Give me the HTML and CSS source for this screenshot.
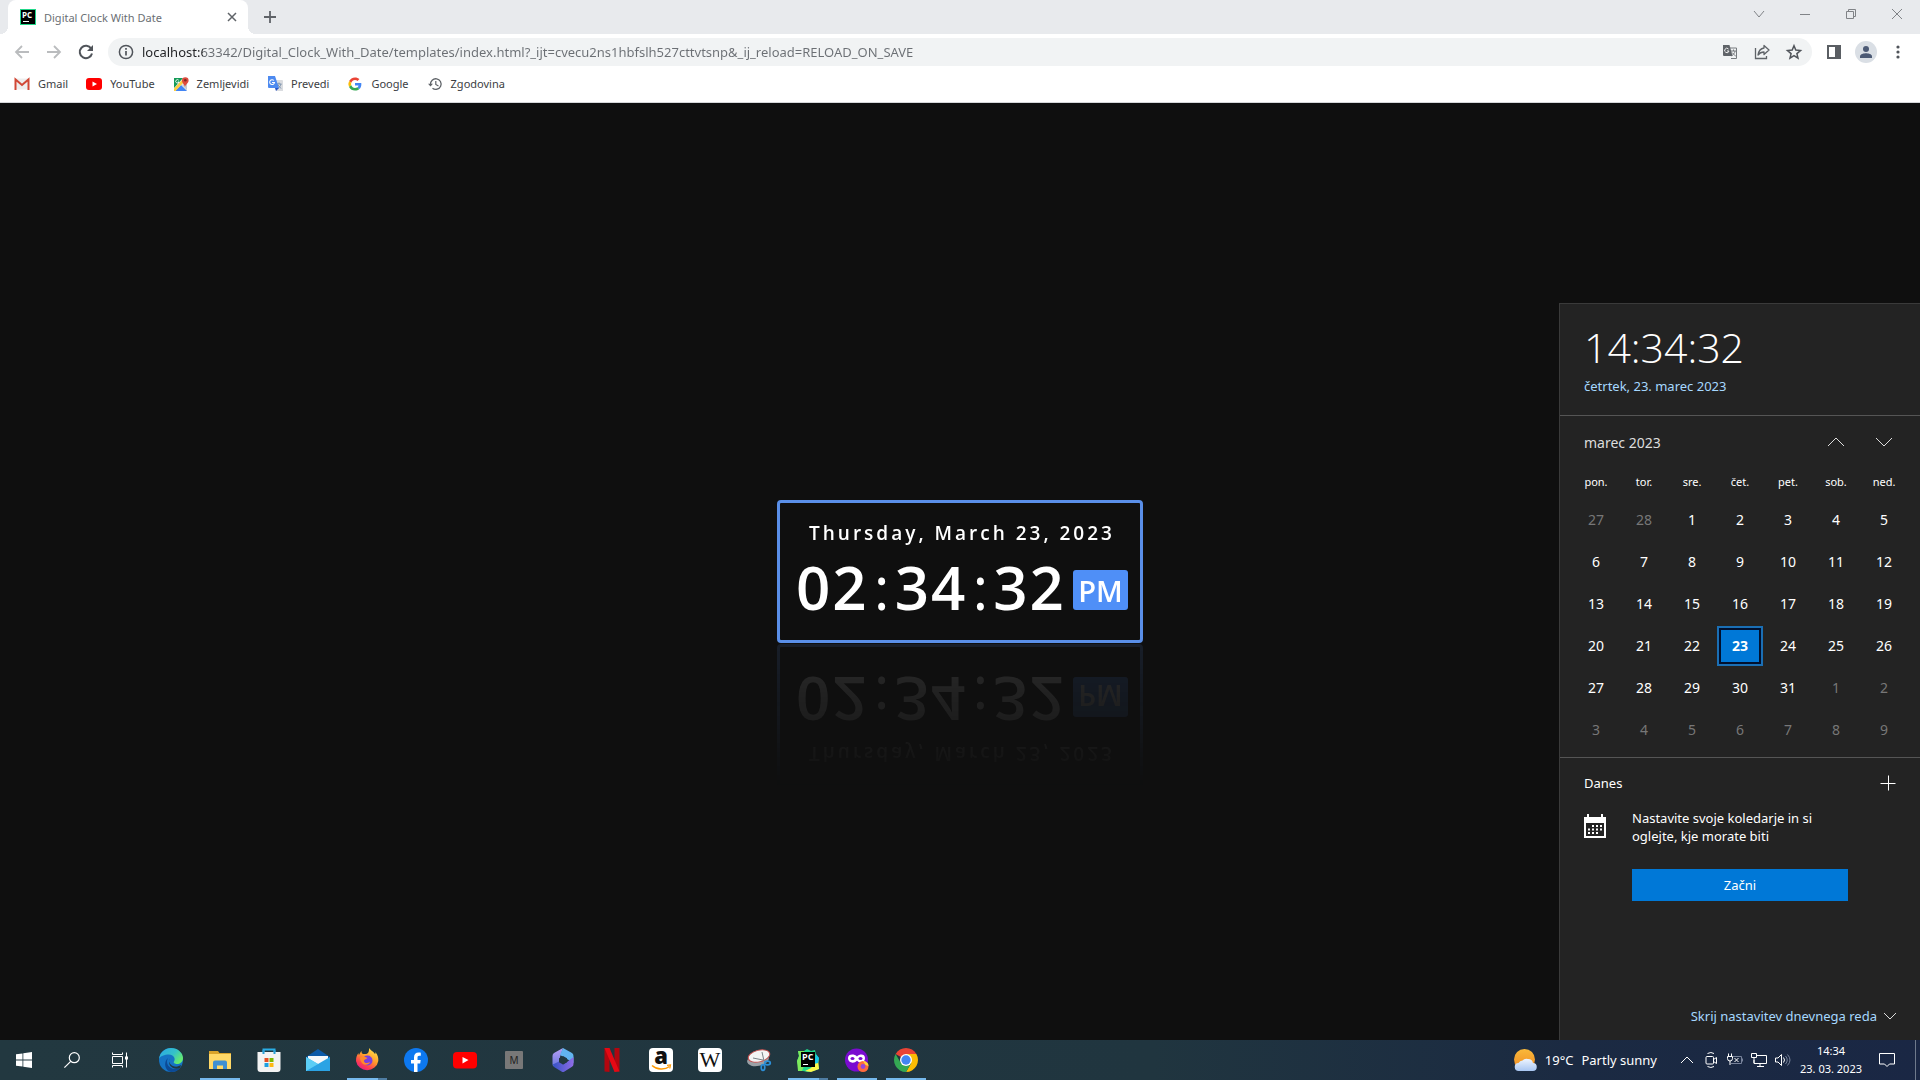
FILE: index.html
```html
<!DOCTYPE html>
<html lang="sl">
<head>
<meta charset="utf-8">
<title>Digital Clock With Date</title>
<link rel="stylesheet" href="styles.css">
</head>
<body>
<header class="browser">
  <div class="tabstrip">
    <div class="tab">
      <svg class="i16" viewBox="0 0 16 16"><rect width="16" height="16" fill="#21d789"/><rect x="1" y="1" width="14" height="14" fill="#000"/><text x="2" y="9" class="pc-text">PC</text><rect x="3" y="12" width="6" height="1" fill="#fff"/></svg>
      <span class="tab-title">Digital Clock With Date</span>
      <button class="icon-btn tab-close" aria-label="Close tab"><svg class="i16" viewBox="0 0 16 16"><path d="M4 4l8 8M12 4l-8 8" stroke="#5f6368" stroke-width="1.500"/></svg></button>
    </div>
    <button class="icon-btn new-tab" aria-label="New tab"><svg class="i16" viewBox="0 0 16 16"><path d="M8 2v12M2 8h12" stroke="#5f6368" stroke-width="1.800"/></svg></button>
    <div class="window-controls">
      <button class="win-btn" aria-label="Search tabs"><svg class="i12" viewBox="0 0 12 12"><path d="M1 3l5 6 5-6"/></svg></button>
      <button class="win-btn" aria-label="Minimize"><svg class="i12" viewBox="0 0 12 12"><path d="M1 6.500h10"/></svg></button>
      <button class="win-btn" aria-label="Restore"><svg class="i12" viewBox="0 0 12 12"><path d="M1.500 3.500h7v7h-7zM3.500 3.500v-2h7v7h-2"/></svg></button>
      <button class="win-btn" aria-label="Close"><svg class="i12" viewBox="0 0 12 12"><path d="M1 1l10 10M11 1L1 11"/></svg></button>
    </div>
  </div>
  <div class="toolbar">
    <div class="nav-buttons">
      <button class="icon-btn" aria-label="Back"><svg class="i16" viewBox="0 0 16 16"><path d="M15 8H2M8 2L2 8l6 6" fill="none" stroke="#babcbe" stroke-width="1.800"/></svg></button>
      <button class="icon-btn" aria-label="Forward"><svg class="i16" viewBox="0 0 16 16"><path d="M1 8h13M8 2l6 6-6 6" fill="none" stroke="#babcbe" stroke-width="1.800"/></svg></button>
      <button class="icon-btn" aria-label="Reload"><svg class="i16" viewBox="0 0 16 16"><path d="M13.200 4.600A6.200 6.200 0 1 0 14 9.500" fill="none" stroke="#50545a" stroke-width="2"/><path d="M15 1v6H9z" fill="#50545a"/></svg></button>
    </div>
    <div class="omnibox">
      <svg class="i16" viewBox="0 0 16 16"><circle cx="8" cy="8" r="6.600" fill="none" stroke="#50545a" stroke-width="1.500"/><path d="M8 7v4.600M8 4v1.700" stroke="#50545a" stroke-width="1.700"/></svg>
      <input class="url" type="text" aria-label="Address" value="localhost:63342/Digital_Clock_With_Date/templates/index.html?_ijt=cvecu2ns1hbfslh527cttvtsnp&amp;_ij_reload=RELOAD_ON_SAVE">
      <button class="icon-btn" aria-label="Translate page"><svg class="i16" viewBox="0 0 16 16"><path d="M8 4h6.500v10.500H9" fill="none" stroke="#777b7f"/><path d="M9 7h5M11.500 5.500V7M13 7c0 2-2 4-4 5M10 8.500l4 4" fill="none" stroke="#777b7f"/><path d="M1 1h6.500l3 11H2a1 1 0 0 1-1-1z" fill="#5f6368"/><path d="M6.500 5A2.200 2.200 0 1 0 7 7H5" fill="none" stroke="#eee" stroke-width="1"/></svg></button>
      <button class="icon-btn" aria-label="Share"><svg class="i16" viewBox="0 0 16 16"><path d="M1.500 4v10.500h11V12" fill="none" stroke="#5f6368" stroke-width="1.300"/><path d="M10 1.500L15 6l-5 4.500V8C7 8 5.500 9 4 11c.5-3.500 2.500-6.500 6-7z" fill="none" stroke="#5f6368" stroke-width="1.300" stroke-linejoin="round"/></svg></button>
      <button class="icon-btn" aria-label="Bookmark"><svg class="i16" viewBox="0 0 16 16"><path d="M8 1.800l1.800 4.300 4.700.4-3.600 3.100 1.100 4.600L8 11.700l-4 2.500 1.100-4.600-3.600-3.100 4.700-.4z" fill="none" stroke="#50545a" stroke-width="1.500"/></svg></button>
    </div>
    <div class="toolbar-end">
      <button class="icon-btn" aria-label="Side panel"><svg class="i16" viewBox="0 0 16 16"><path d="M1 1h14v14H1z M3 3v10h6V3z" fill="#5a5e63" fill-rule="evenodd"/></svg></button>
      <button class="icon-btn" aria-label="Profile"><svg class="i22" viewBox="0 0 22 22"><circle cx="11" cy="11" r="11" fill="#dadfe5"/><circle cx="11" cy="8" r="3" fill="#4c5a75"/><path d="M5 17v-1.500C5 13 9 12.300 11 12.300s6 .7 6 3.200V17z" fill="#4c5a75"/></svg></button>
      <button class="icon-btn" aria-label="Menu"><svg class="i16" viewBox="0 0 16 16"><g fill="#50545a"><circle cx="8" cy="3" r="1.600"/><circle cx="8" cy="8" r="1.600"/><circle cx="8" cy="13" r="1.600"/></g></svg></button>
    </div>
  </div>
  <nav class="bookmarks">
    <a href="#"><svg class="i16" viewBox="0 0 16 16"><path d="M2 2.500h12v11H2z" fill="#eee"/><path d="M1.500 14V3.500L8 9l6.500-5.500V14" fill="none" stroke="#d14836" stroke-width="2"/></svg>Gmail</a>
    <a href="#"><svg class="i16" viewBox="0 0 16 16"><rect y="2" width="16" height="12" rx="3" fill="#f00"/><path d="M6.500 5.500v5L11 8z" fill="#fff"/></svg>YouTube</a>
    <a href="#"><svg class="i16" viewBox="0 0 16 16"><rect x="1" y="2" width="13" height="13" rx="1" fill="#e8eaed"/><path d="M1 2h9L1 12z" fill="#169b58"/><path d="M2 15l6-6 6 6z" fill="#4285f4"/><path d="M1 12.500L10 3l2 2-9.500 10H1z" fill="#ffcf3f"/><path d="M9 9l5-2v7z" fill="#c7cbd0"/><path d="M12 11c-.5-3-3-3.500-3-6.500a3.300 3.300 0 0 1 6.600 0c0 3-3 3.500-3.600 6.500z" fill="#dd4b3e"/><circle cx="12.300" cy="4.300" r="1.300" fill="#812a22"/><path d="M5.700 4.200A1.700 1.700 0 1 0 6 6H4.700" fill="none" stroke="#fff" stroke-width=".9"/></svg>Zemljevidi</a>
    <a href="#"><svg class="i16" viewBox="0 0 16 16"><path d="M6 4h9a1 1 0 0 1 1 1v10H9z" fill="#dadce0"/><path d="M9.500 8h5M12 6.500V8M14 8c-.5 2.500-2 3.500-3.500 4.500M11 9l3 3.500" fill="none" stroke="#7c93ad"/><path d="M9 15l3-3H8z" fill="#2a56c6"/><path d="M1 0h7l4 12H2a1 1 0 0 1-1-1z" fill="#4d8af0"/><path d="M6.900 4.500A2.400 2.400 0 1 0 7.500 6.500H5" fill="none" stroke="#fff" stroke-width="1.100"/></svg>Prevedi</a>
    <a href="#"><svg class="i16" viewBox="-5 -5 58 58"><path fill="#ea4335" d="M24 9.500c3.500 0 6.700 1.200 9.200 3.600l6.900-6.900C35.900 2.400 30.500 0 24 0 14.600 0 6.500 5.400 2.600 13.200l8 6.200C12.400 13.700 17.700 9.500 24 9.500z"/><path fill="#4285f4" d="M47 24.600c0-1.600-.2-3.100-.4-4.600H24v9h12.900c-.6 3-2.200 5.500-4.700 7.200l7.700 6C44.400 38 47 31.800 47 24.600z"/><path fill="#fbbc05" d="M10.500 28.600a14.500 14.500 0 0 1 0-9.200l-8-6.200a24 24 0 0 0 0 21.600z"/><path fill="#34a853" d="M24 48c6.500 0 11.900-2.100 15.900-5.800l-7.700-6c-2.200 1.400-4.900 2.300-8.200 2.300-6.300 0-11.600-4.200-13.500-9.900l-8 6.200C6.500 42.600 14.600 48 24 48z"/></svg>Google</a>
    <a href="#"><svg class="i16" viewBox="0 0 16 16"><path d="M3.500 8.500A5.300 5.300 0 1 1 5.500 12.200" fill="none" stroke="#5f6368" stroke-width="1.300"/><path d="M1 7.800h5L3.500 10.500z" fill="#5f6368"/><path d="M8.800 5V8.500l2.700 1.600" fill="none" stroke="#5f6368" stroke-width="1.200"/></svg>Zgodovina</a>
  </nav>
</header>

<main class="page">
  <section class="clock">
    <div class="clock-date">Thursday, March 23, 2023</div>
    <div class="clock-row">
      <div class="clock-time"><span>02</span><span class="colon">:</span><span>34</span><span class="colon">:</span><span>32</span></div>
      <span class="meridiem">PM</span>
    </div>
  </section>

  <aside class="flyout">
    <div class="fly-top">
      <div class="fly-time">14:34:32</div>
      <a class="fly-date" href="#">četrtek, 23. marec 2023</a>
    </div>
    <div class="fly-cal">
      <div class="month-row">
        <button class="month">marec 2023</button>
        <button class="arrow" aria-label="Previous month"><svg class="i18" viewBox="0 0 18 18"><path d="M1 13l8-8 8 8"/></svg></button>
        <button class="arrow" aria-label="Next month"><svg class="i18" viewBox="0 0 18 18"><path d="M1 5l8 8 8-8"/></svg></button>
      </div>
      <table class="days">
        <thead><tr><th>pon.</th><th>tor.</th><th>sre.</th><th>čet.</th><th>pet.</th><th>sob.</th><th>ned.</th></tr></thead>
        <tbody>
          <tr><td class="out">27</td><td class="out">28</td><td>1</td><td>2</td><td>3</td><td>4</td><td>5</td></tr>
          <tr><td>6</td><td>7</td><td>8</td><td>9</td><td>10</td><td>11</td><td>12</td></tr>
          <tr><td>13</td><td>14</td><td>15</td><td>16</td><td>17</td><td>18</td><td>19</td></tr>
          <tr><td>20</td><td>21</td><td>22</td><td><span class="today">23</span></td><td>24</td><td>25</td><td>26</td></tr>
          <tr><td>27</td><td>28</td><td>29</td><td>30</td><td>31</td><td class="out">1</td><td class="out">2</td></tr>
          <tr><td class="out">3</td><td class="out">4</td><td class="out">5</td><td class="out">6</td><td class="out">7</td><td class="out">8</td><td class="out">9</td></tr>
        </tbody>
      </table>
    </div>
    <div class="fly-agenda">
      <div class="agenda-head">
        <span>Danes</span>
        <button class="icon-btn" aria-label="Add event"><svg class="i16" viewBox="0 0 16 16"><path d="M.5 8.500h15M8.500 .5v15" stroke="#fff"/></svg></button>
      </div>
      <div class="agenda-body">
        <svg class="cal-icon" viewBox="0 0 22 24"><path d="M0 3h22v21H0zM2 9v13h18V9z" fill="#fff" fill-rule="evenodd"/><path d="M3 0h2v4H3zM17 0h2v4h-2z" fill="#fff"/><path d="M8 11h2v2H8zM12 11h2v2h-2zM16 11h2v2h-2zM4 14.500h2v2H4zM8 14.500h2v2H8zM12 14.500h2v2h-2zM16 14.500h2v2h-2zM4 18h2v2H4zM8 18h2v2H8zM12 18h2v2h-2z" fill="#fff"/></svg>
        <div class="agenda-text">
          <p>Nastavite svoje koledarje in si<br>oglejte, kje morate biti</p>
          <button class="start">Začni</button>
        </div>
      </div>
      <a class="hide-link" href="#">Skrij nastavitev dnevnega reda <svg class="i12" viewBox="0 0 12 12"><path d="M0 3l6 6 6-6"/></svg></a>
    </div>
  </aside>
</main>

<footer class="taskbar">
  <div class="system">
    <button class="sys-btn" aria-label="Start"><svg class="i16" viewBox="0 0 16 16"><path d="M0 2.300L6.500 1.400v6.200H0zM7.300 1.300L16 0v7.600H7.300zM0 8.400h6.500v6.200L0 13.700zM7.300 8.400H16V16l-8.700-1.300z" fill="#fff"/></svg></button>
    <button class="sys-btn" aria-label="Search"><svg class="i16" viewBox="0 0 16 16"><circle cx="10.300" cy="5.700" r="5" fill="none" stroke="#fff" stroke-width="1.200"/><path d="M6.700 9.300L.4 15.600" stroke="#fff" stroke-width="1.200"/></svg></button>
    <button class="sys-btn" aria-label="Task view"><svg class="i16" viewBox="0 0 16 16"><g fill="none" stroke="#fff"><path d="M.5 4.500h10v7H.5zM.5 .5v2h10V.5M.5 15.500v-2h10v2M14.500 .5v15"/></g><path d="M13 4.500h3v3h-3z" fill="#fff"/></svg></button>
  </div>
  <div class="apps">
    <button class="app" aria-label="Edge"><svg class="i24" viewBox="0 0 24 24"><defs><linearGradient id="e1" x1="0" x2="1" y1="0" y2=".6"><stop stop-color="#2aa7e8"/><stop offset=".6" stop-color="#35c1c8"/><stop offset="1" stop-color="#66eb6e"/></linearGradient></defs><circle cx="12" cy="12" r="12" fill="#1573c4"/><path d="M0 11C1 4 6 0 12 0c7 0 12 5 12 10 0 4-3 6-6 6-2 0-4-1-3-2.500 2-3-.5-7-5-7S1 8 0 11z" fill="url(#e1)"/><path d="M9 10c-3 5 1 11 7 11 2 0 4-.6 5.500-1.500A12 12 0 0 1 12 24C6 23 4 14 9 10z" fill="#0c4a96"/><path d="M10.500 10.500c-1.500 3 .5 7 5 8 2.500.5 5-.5 6.500-1.500 0 1-.5 2-1.200 3C15 22.500 8 18 10.500 10.500z" fill="#223840"/></svg></button>
    <button class="app active" aria-label="File Explorer"><svg class="i24" viewBox="0 0 24 24"><path d="M1 3h9l1.500 2H23v4H1z" fill="#d9a32a"/><path d="M1 6h22v15H1z" fill="#ffd867"/><path d="M5 21v-6.500a2 2 0 0 1 2-2h10a2 2 0 0 1 2 2V21h-4v-3.500H9V21z" fill="#3f8fd2"/></svg></button>
    <button class="app" aria-label="Microsoft Store"><svg class="i24" viewBox="0 0 24 24"><path d="M6.500 6V1.500h11V6" fill="none" stroke="#2aaee6" stroke-width="2"/><path d="M.5 4h23v17a3 3 0 0 1-3 3h-17a3 3 0 0 1-3-3z" fill="#f3f3f3"/><path d="M6.500 2v4M17.500 2v4" stroke="#2a9fd6" stroke-width="2"/><path d="M7.500 10h4v4h-4z" fill="#e64f22"/><path d="M12.500 10h4v4h-4z" fill="#7eb900"/><path d="M7.500 15h4v4h-4z" fill="#1e9fe0"/><path d="M12.500 15h4v4h-4z" fill="#fdb813"/></svg></button>
    <button class="app" aria-label="Mail"><svg class="i24" viewBox="0 0 24 24"><path d="M0 9l12-8 12 8v4H0z" fill="#0c5aa8"/><path d="M2 8h20v8H2z" fill="#f5f8fb"/><path d="M0 9l24 14H0z" fill="#42b9ee"/><path d="M24 9L0 23h24z" fill="#2ba3e4"/><path d="M0 9l12 7L0 23z" fill="#5bcdf5"/></svg></button>
    <button class="app active multi" aria-label="Firefox"><svg class="i24" viewBox="0 0 24 24"><defs><linearGradient id="f1" x1=".8" x2=".2" y1="0" y2="1"><stop stop-color="#ffe44b"/><stop offset=".45" stop-color="#ff9a2b"/><stop offset=".75" stop-color="#ff3f4f"/><stop offset="1" stop-color="#e3148e"/></linearGradient></defs><path d="M14 0c1 2 4 3 6 6 .6-.2.500-1 .3-2C23 7 23.500 10 23.300 13A11.300 11 0 0 1 1 13c0-4 1-6 2.500-8 0 1 0 1.500.5 2C5 5 5.500 4 6.500 3c0 1.500.3 2.500 1.500 3 3 0 4 0 5-1 .8-1 1.200-3 1-5z" fill="url(#f1)"/><circle cx="12.500" cy="12.500" r="5" fill="#7a3ee0"/><path d="M5 10c2-2 5-1 7.500 0-1 1.500-3 1-3.500 2.500C8.500 15 12 16 15 14c-1 4-9 4.500-10-4z" fill="#ff8a2a"/></svg></button>
    <button class="app" aria-label="Facebook"><svg class="i24" viewBox="0 0 24 24"><circle cx="12" cy="12" r="12" fill="#0d78f0"/><path d="M10 24v-8.500H7V12h3V9.400C10 6.300 11.800 4.600 14.600 4.600c1.200 0 2.200.2 2.200.2v3h-1.500c-1.500 0-1.800.9-1.800 1.900V12h3.200l-.5 3.500h-2.700V24z" fill="#fff"/></svg></button>
    <button class="app" aria-label="YouTube"><svg class="i24" viewBox="0 0 24 24"><rect y="4" width="24" height="16.500" rx="4" fill="#f00"/><path d="M9.500 9v6.500L15.500 12z" fill="#fff"/></svg></button>
    <button class="app" aria-label="M"><span class="m-icon">M</span></button>
    <button class="app" aria-label="Microsoft 365"><svg class="i24" viewBox="0 0 24 24"><defs><linearGradient id="m1" x1="0" x2="0" y1="0" y2="1"><stop stop-color="#b9a0f5"/><stop offset="1" stop-color="#6a78e0"/></linearGradient><linearGradient id="m2" x1="0" x2="1"><stop stop-color="#3552c4"/><stop offset="1" stop-color="#8f6ce6"/></linearGradient></defs><path d="M12 0L3 5Q1.500 6 1.500 8v8q0 2 1.500 2.500L9 15V9z" fill="url(#m1)"/><path d="M12 0l9 5q1.500 1 1.500 3v7l-6.500-4-7-4z" fill="#62b4f0"/><path d="M1.800 16.500L9 13l3 3.500 4-2.500 6.500-5v7q0 2-1.500 2.800l-7.500 4.700q-1.500 1-3 0L3 19z" fill="url(#m2)"/><path d="M12 8l4 2.300v3.900L12 16.500l-4-2.300v-3.900z" fill="#223840"/></svg></button>
    <button class="app" aria-label="Netflix"><svg class="i24" viewBox="0 0 24 24"><path d="M4.500 0h5v24l-5-.5zM14.500 0h5v23.500l-5-1z" fill="#b1060f"/><path d="M4.500 0h5l10 23.500-5 .5z" fill="#e50914"/></svg></button>
    <button class="app" aria-label="Amazon"><svg class="i24" viewBox="0 0 24 24"><rect width="24" height="24" rx="4" fill="#fff"/><text x="12" y="16" class="amazon-text">a</text><path d="M3 17.500c5 4.500 13 4.500 17.500 1" fill="none" stroke="#f90" stroke-width="1.500"/><path d="M18 17.300l3.500-.3-.7 3.500" fill="none" stroke="#f90" stroke-width="1.200"/></svg></button>
    <button class="app" aria-label="Wikipedia"><svg class="i24" viewBox="0 0 24 24"><rect width="24" height="24" rx="4" fill="#fff"/><text x="12" y="19" class="wiki-text">W</text></svg></button>
    <button class="app" aria-label="Snipping Tool"><svg class="i24" viewBox="0 0 24 24"><ellipse cx="11" cy="12" rx="11" ry="6" fill="#9ba1a6" transform="rotate(-12 11 12)"/><ellipse cx="12" cy="8" rx="11" ry="5.800" fill="#f4f4f4" stroke="#c6504f" transform="rotate(-14 12 8)"/><path d="M6 10l10 2M15 4l2 9" stroke="#7a8288" fill="none"/><g fill="none" stroke="#2c8fd8" stroke-width="1.700"><ellipse cx="20.500" cy="15" rx="2.800" ry="1.800"/><ellipse cx="16" cy="19.500" rx="1.800" ry="2.800"/></g></svg></button>
    <button class="app active multi" aria-label="PyCharm"><svg class="i24" viewBox="0 0 24 24"><path d="M2 3l6 0 3-2 4 2 4-1 1 5 3 3-1 5 1 6-6 2-5 1-5-1-4 0-1-6L1 13l2-5z" fill="#21d789"/><path d="M1 13l2-5-1-5 6 0 2 10-4 10-4 0z" fill="#7dea5c"/><path d="M9 23l6-3 7-9 1 10-8 3z" fill="#fcf84a"/><path d="M20 6l3 4-1 5-4 1z" fill="#15c5e8"/><path d="M5 4h14v15H5z" fill="#000"/><text x="6" y="12" class="pc-text pc-large">PC</text><path d="M7 16h5v1H7z" fill="#fff"/></svg></button>
    <button class="app active" aria-label="Firefox Private Browsing"><svg class="i24" viewBox="0 0 24 24"><circle cx="11.500" cy="12" r="11.500" fill="#7a0bd0"/><path d="M3 10c0-4 6-4.500 9-1.500C15 5.500 20 6 20 10c0 5-5 6-8 2.800C9 16 3 15 3 10z" fill="#fff"/><ellipse cx="7.500" cy="10.500" rx="2" ry="1.500" fill="#7a0bd0"/><ellipse cx="15.500" cy="10.500" rx="2" ry="1.500" fill="#7a0bd0"/><circle cx="18" cy="18.500" r="5.500" fill="#ff6a3d"/><path d="M18 13c3 0 5.500 2 5.500 5l-3-1z" fill="#ffd13b"/><circle cx="18" cy="18.500" r="2.400" fill="#9548dc"/></svg></button>
    <button class="app active" aria-label="Chrome"><svg class="i24" viewBox="0 0 24 24"><path d="M12 12L1.610 6A12 12 0 0 1 22.390 6z" fill="#ea4335"/><path d="M12 6h10.390A12 12 0 0 1 12 24l5.200-9z" fill="#fbbc04"/><path d="M1.610 6A12 12 0 0 0 12 24l5.200-9-5.200 3-5.200-3z" fill="#34a853"/><circle cx="12" cy="12" r="6" fill="#fff"/><circle cx="12" cy="12" r="4.700" fill="#4285f4"/></svg></button>
  </div>
  <div class="tray">
    <button class="weather"><svg class="i24" viewBox="0 0 24 24"><defs><linearGradient id="s1" x1="0" x2="0" y1="0" y2="1"><stop stop-color="#f9b93a"/><stop offset="1" stop-color="#f08a24"/></linearGradient><linearGradient id="c1" x1="0" x2="0" y1="0" y2="1"><stop stop-color="#eef5ff"/><stop offset="1" stop-color="#a8c6f2"/></linearGradient></defs><circle cx="11.500" cy="11.500" r="10.500" fill="url(#s1)"/><path d="M6 23a4 4 0 0 1-.5-8 5 5 0 0 1 4-2.500A5.500 5.500 0 0 1 15 11a5 5 0 0 1 5 4 4 4 0 0 1-.5 8z" fill="url(#c1)"/></svg><span>19°C</span><span>Partly sunny</span></button>
    <div class="tray-icons">
      <button class="icon-btn" aria-label="Show hidden icons"><svg class="i16" viewBox="0 0 16 16"><path d="M2 11l6-6 6 6"/></svg></button>
      <button class="icon-btn" aria-label="Meet now"><svg class="i16" viewBox="0 0 16 16"><rect x="3" y="4.500" width="7.500" height="7.500" rx="1"/><path d="M10.500 7.500L13.500 5.500v6l-3-2M4.500 1.500Q8 -.5 11 1.500M4.500 14.500Q8 16.500 11 14.500"/></svg></button>
      <button class="icon-btn" aria-label="Battery"><svg class="i16" viewBox="0 0 16 16"><path class="dim" d="M6 4.500h8.500v7H4M15.500 6.500v3"/><path d="M1.500 1.500v3M4.500 1.500v3M.5 4.500h5v2a2 2 0 0 1-5 0zM3 9v4M7.500 6l4 4M11.500 6l-4 4"/></svg></button>
      <button class="icon-btn" aria-label="Network"><svg class="i16" viewBox="0 0 16 16"><path d="M5 3.500h10.500v8H3V8M9 11.500v3M6 14.500h7M.5 1.500h5v4h-5zM3 5.500V11"/></svg></button>
      <button class="icon-btn" aria-label="Volume"><svg class="i16" viewBox="0 0 16 16"><path d="M.5 6h2.500l3.500-3.500v11L3 10H.5zM8.500 5.500q2 2.500 0 5"/><path class="dim" d="M10.500 4q3.500 4 0 8M12.500 2.500q5 5.500 0 11"/></svg></button>
    </div>
    <button class="tray-clock"><span>14:34</span><span>23. 03. 2023</span></button>
    <button class="icon-btn notify" aria-label="Notifications"><svg class="i16" viewBox="0 0 16 16"><path d="M.5 1.500h15v10.500h-5L8 14.500 5.500 12h-5z"/></svg></button>
    <button class="peek" aria-label="Show desktop"></button>
  </div>
</footer>
</body>
</html>
```
FILE: styles.css
```css
* { box-sizing: border-box; }

body {
  margin: 0;
  min-height: 100vh;
  display: flex;
  flex-direction: column;
  font-family: "Noto Sans", "Open Sans", sans-serif;
  background: #0f0f0f;
}

button {
  font: inherit;
  color: inherit;
  background: none;
  border: 0;
  padding: 0;
  margin: 0;
}

a { text-decoration: none; }
svg { display: block; flex: none; overflow: visible; }

.i12 { width: 12px; height: 12px; }
.i16 { width: 16px; height: 16px; }
.i18 { width: 18px; height: 18px; }
.i22 { width: 22px; height: 22px; }
.i24 { width: 24px; height: 24px; }

.icon-btn { display: flex; align-items: center; justify-content: center; }

.pc-text { font: 700 8px "Open Sans", sans-serif; fill: #fff; }
.pc-large { font-size: 9px; }

/* Browser chrome */
.browser { background: #fff; border-bottom: 1px solid #d5d7da; }

.tabstrip {
  display: flex;
  align-items: flex-end;
  height: 34px;
  padding-left: 8px;
  background: #e8eaed;
}

.tab {
  position: relative;
  display: flex;
  align-items: center;
  width: 240px;
  height: 34px;
  padding: 0 8px 0 12px;
  background: #fff;
  border-radius: 8px 8px 0 0;
}

.tab::before, .tab::after {
  content: "";
  position: absolute;
  bottom: 0;
  width: 8px;
  height: 8px;
}
.tab::before { left: -8px; background: radial-gradient(circle at 0 0, #e8eaed 8px, #fff 8px); }
.tab::after { right: -8px; background: radial-gradient(circle at 100% 0, #e8eaed 8px, #fff 8px); }

.tab-title { flex: 1; padding-left: 8px; font-size: 11px; color: #6b6f74; }
.new-tab { width: 28px; height: 34px; margin-left: 8px; }

.window-controls { display: flex; margin-left: auto; }
.win-btn {
  display: flex;
  align-items: center;
  justify-content: center;
  width: 46px;
  height: 28px;
  margin-bottom: 6px;
}
.win-btn path { fill: none; stroke: #808387; }

.toolbar { display: flex; align-items: center; height: 36px; padding: 0 14px; }
.nav-buttons { display: flex; gap: 16px; margin-right: 14px; }

.omnibox {
  flex: 1;
  display: flex;
  align-items: center;
  gap: 16px;
  height: 28px;
  padding: 0 10px;
  background: #f1f3f4;
  border-radius: 14px;
}

.url {
  flex: 1;
  min-width: 0;
  margin-left: -8px;
  padding: 0;
  border: 0;
  font: 13px/20px "Noto Sans", "Open Sans", sans-serif;
  color: transparent;
  background: linear-gradient(90deg, #202124 61px, #6b6f74 61px);
  background-clip: text;
}

.toolbar-end { display: flex; align-items: center; gap: 13px; margin-left: 14px; }

.bookmarks { display: flex; gap: 18px; height: 32px; padding: 0 14px; }
.bookmarks a {
  display: flex;
  align-items: center;
  gap: 8px;
  height: 27px;
  font-size: 11px;
  color: #3c4043;
}

/* Page */
.page {
  position: relative;
  flex: 1;
  display: flex;
  align-items: center;
  justify-content: center;
}

.clock {
  padding: 16px 12px 19px 16px;
  border: 3px solid #5a8fe8;
  border-radius: 4px;
  color: #fff;
  font-family: "Open Sans", sans-serif;
  font-weight: 600;
  -webkit-box-reflect: below 1px linear-gradient(transparent, rgba(255, 255, 255, 0.12));
}

.clock-date {
  margin-bottom: 6px;
  font-size: 19px;
  line-height: 28px;
  letter-spacing: 3px;
  text-align: center;
}

.clock-row { display: flex; align-items: center; gap: 7px; }
.clock-time { display: flex; font-size: 60px; line-height: 68px; letter-spacing: 2px; }
.colon { width: 26px; padding-left: 2px; font-weight: 500; text-align: center; }

.meridiem {
  width: 55px;
  height: 40px;
  margin-top: 6px;
  background: #4f8ff7;
  border-radius: 3px;
  font-size: 29px;
  line-height: 42px;
  text-align: center;
}

/* Calendar flyout */
.flyout {
  position: absolute;
  right: 0;
  bottom: 0;
  width: 361px;
  border: solid #3a3a3a;
  border-width: 1px 0 0 1px;
  background: #232323;
  color: #fff;
  font-size: 13px;
}

.fly-top { padding: 15px 24px 19px; border-bottom: 1px solid #555; }
.fly-time { font: 300 41px/56px "Open Sans", sans-serif; }
.fly-date { display: block; padding-top: 1px; line-height: 20px; color: #a6d8ff; }

.fly-cal { padding: 6px 12px; border-bottom: 1px solid #555; }
.month-row { display: flex; align-items: center; height: 40px; }
.month { flex: 1; padding-left: 12px; text-align: left; font-size: 14px; color: #ddd; }
.arrow { display: flex; align-items: center; justify-content: center; width: 48px; height: 40px; }
.arrow path, .hide-link path { fill: none; stroke: #ddd; }

.days { width: 336px; table-layout: fixed; border-collapse: collapse; }
.days th { height: 37px; padding: 1px 0 0; font-size: 11px; font-weight: 400; }
.days td { height: 42px; padding: 0 0 1px; text-align: center; font-size: 14px; }
.days .out { color: #777; }

.today {
  display: block;
  width: 46px;
  height: 40px;
  margin: 0 auto;
  border: 2px solid #1a6fb5;
  outline: 2px solid #00102e;
  outline-offset: -4px;
  background: #0078d7;
  line-height: 35px;
  font-weight: 700;
}

.fly-agenda { padding: 15px 24px 12px; }
.agenda-head { display: flex; align-items: center; justify-content: space-between; height: 20px; }
.agenda-body { display: flex; gap: 26px; margin-top: 16px; }
.cal-icon { width: 22px; height: 24px; margin-top: 5px; }
.agenda-text { width: 216px; }
.agenda-text p { margin: 0; line-height: 18px; }
.start { width: 216px; height: 32px; margin-top: 24px; background: #0078d7; }
.hide-link {
  display: flex;
  align-items: center;
  justify-content: flex-end;
  gap: 7px;
  height: 24px;
  margin-top: 103px;
  color: #a6d8ff;
}

/* Taskbar */
.taskbar {
  display: flex;
  height: 40px;
  background: linear-gradient(90deg, #223840, #20353f 60%, #1b2a42 82%, #1a2744);
  color: #fff;
}

.system { display: flex; margin-right: 7px; }
.sys-btn { display: flex; align-items: center; justify-content: center; width: 48px; }
.apps { display: flex; gap: 9px; }
.app {
  position: relative;
  display: flex;
  align-items: center;
  justify-content: center;
  width: 40px;
}
.active { box-shadow: inset 0 -2px #76b9ed; }
.multi::after {
  content: "";
  position: absolute;
  right: 0;
  bottom: 0;
  width: 9px;
  height: 2px;
  background: #4f7da3;
}

.m-icon {
  width: 18px;
  height: 18px;
  background: #787878;
  border-radius: 1px;
  color: #222;
  font-size: 10px;
  line-height: 18px;
}
.amazon-text { font: 800 22px "Open Sans", sans-serif; text-anchor: middle; fill: #111; }
.wiki-text { font: 22px "Liberation Serif", serif; text-anchor: middle; fill: #111; }

.tray { display: flex; align-items: center; margin-left: auto; }
.weather { display: flex; align-items: center; gap: 8px; font-size: 13px; margin-right: 22px; }
.tray-icons { display: flex; gap: 8px; margin-right: 8px; }
.tray-icons path, .tray-icons rect, .notify path { fill: none; stroke: #fff; }
.tray-icons .dim { stroke: #77829a; }
.tray-clock {
  display: flex;
  flex-direction: column;
  align-items: center;
  width: 64px;
  font-size: 11px;
  line-height: 18px;
  white-space: nowrap;
}
.notify { width: 48px; height: 40px; }
.peek { width: 5px; height: 40px; margin-left: 4px; border-left: 1px solid #6f7a8c; }
```
